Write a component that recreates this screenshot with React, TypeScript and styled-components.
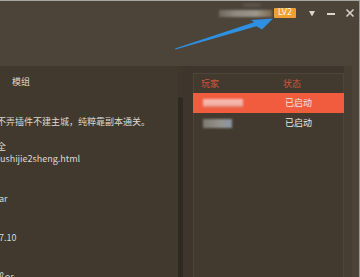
import React from "react";
import styled, { createGlobalStyle } from "styled-components";

const Global = createGlobalStyle`
  html, body { margin: 0; padding: 0; background: #4c4439; }
  body { font-family: "Noto Sans CJK SC", "Noto Sans", sans-serif; }
`;

const Window = styled.div`
  position: relative;
  width: 360px;
  height: 277px;
  box-sizing: border-box;
  background: #4c4439;
  border-top: 1px solid #a8a6a2;
  border-right: 1px solid #9c9a96;
  display: flex;
  flex-direction: column;
  overflow: hidden;
`;

const TitleBar = styled.div`
  height: 65px;
  flex: none;
  box-sizing: border-box;
  display: flex;
  justify-content: flex-end;
  align-items: flex-start;
  padding: 6px 4px 0 0;
`;

const UserBlur = styled.div`
  position: relative;
  width: 53px;
  height: 7px;
  margin-top: 3px;
  margin-right: 2px;
  background: linear-gradient(90deg, #6d675d, #8f8980 30%, #9c968c 70%, #7c6a4f);
  filter: blur(1.1px);
  &::before {
    content: "";
    position: absolute;
    left: 23px;
    top: -7px;
    width: 20px;
    height: 4px;
    border-radius: 50%;
    background: #5c544a;
  }
`;

const Badge = styled.div`
  width: 22px;
  height: 10px;
  margin-top: 1px;
  background: #efa033;
  border-radius: 1px;
  color: #fff6e6;
  font-family: "DejaVu Sans", "Liberation Sans", sans-serif;
  font-size: 8px;
  line-height: 10px;
  text-align: center;
`;

const IconBox = styled.div<{ $gap: number }>`
  width: 10px;
  height: 10px;
  margin-left: ${(p) => p.$gap}px;
  margin-top: 1px;
  display: flex;
  & svg { display: block; }
`;

const Body = styled.div`
  flex: 1;
  display: flex;
  margin-right: 7px;
  background: #3f372d;
  min-height: 0;
`;

const LeftPanel = styled.div`
  width: 178px;
  flex: none;
  background: #41392e;
  display: flex;
  flex-direction: column;
  overflow: hidden;
`;

const LeftHeader = styled.div`
  height: 31px;
  flex: none;
  box-sizing: border-box;
  padding-left: 12px;
  color: #dcd8d0;
  font-size: 9px;
  line-height: 31px;
`;

const List = styled.div`
  display: flex;
  flex-direction: column;
`;

const Item = styled.div<{ $top: number; $shift: number }>`
  margin-top: ${(p) => p.$top}px;
  margin-left: ${(p) => p.$shift}px;
  color: #dcd8d0;
  font-size: 9px;
  line-height: 12px;
  white-space: nowrap;
`;

const ScrollTrack = styled.div`
  width: 5px;
  flex: none;
  margin-top: 31px;
  background: #2e2922;
  border-radius: 3px 3px 0 0;
`;

const Gutter = styled.div<{ $w: number; $bg: string }>`
  width: ${(p) => p.$w}px;
  flex: none;
  background: ${(p) => p.$bg};
`;

const RightPanel = styled.div`
  width: 151px;
  flex: none;
  margin-top: 7px;
  background: #433a2f;
  box-shadow: inset 1px 0 #4d4539, inset -1px 0 #4d4539, inset 0 1px #4d4539;
  display: flex;
  flex-direction: column;
  padding-top: 1px;
`;

const Row = styled.div<{ $active?: boolean; $head?: boolean }>`
  height: ${(p) => (p.$head ? 19 : 20)}px;
  display: grid;
  grid-template-columns: 82px 1fr;
  align-items: center;
  padding-left: 8px;
  background: ${(p) => (p.$active ? "#f15c3e" : "transparent")};
  color: ${(p) => (p.$head ? "#cf553c" : "#ece8e0")};
  font-size: 9px;
  line-height: 12px;
`;

const Cell = styled.div<{ $pad?: number }>`
  padding-left: ${(p) => p.$pad ?? 0}px;
  white-space: nowrap;
`;

const NameBlur = styled.div<{ $w: number; $c: string }>`
  width: ${(p) => p.$w}px;
  height: 9px;
  margin-left: 2px;
  background: ${(p) => p.$c};
  filter: blur(1.3px);
`;

const ArrowLayer = styled.svg`
  position: absolute;
  left: 0;
  top: -1px;
  pointer-events: none;
`;

export default function App() {
  return (
    <>
      <Global />
      <Window>
        <TitleBar>
          <UserBlur />
          <Badge>LV2</Badge>
          <IconBox $gap={11}>
            <svg width="10" height="10" viewBox="0 0 10 10">
              <polygon points="2,3 8,3 5,8.5" fill="#dad6ce" />
            </svg>
          </IconBox>
          <IconBox $gap={9}>
            <svg width="10" height="10" viewBox="0 0 10 10">
              <rect x="1" y="5" width="8" height="2" fill="#dad6ce" />
            </svg>
          </IconBox>
          <IconBox $gap={9}>
            <svg width="10" height="10" viewBox="0 0 10 10">
              <path d="M1.5 1.5 L8.5 8.5 M8.5 1.5 L1.5 8.5" stroke="#dad6ce" strokeWidth="1.5" />
            </svg>
          </IconBox>
        </TitleBar>
        <Body>
          <LeftPanel>
            <LeftHeader>模组</LeftHeader>
            <List>
              <Item $top={19} $shift={-3}>不弄插件不建主城，纯粹靠副本通关。</Item>
              <Item $top={13} $shift={-3}>全</Item>
              <Item $top={0} $shift={0}>ushijie2sheng.html</Item>
              <Item $top={28} $shift={-1}>ar</Item>
              <Item $top={27} $shift={-1}>7.10</Item>
              <Item $top={27} $shift={-1}>ßor</Item>
            </List>
          </LeftPanel>
          <ScrollTrack />
          <Gutter $w={10} $bg="#3e362c" />
          <RightPanel>
            <Row $head>
              <Cell>玩家</Cell>
              <Cell>状态</Cell>
            </Row>
            <Row $active>
              <Cell>
                <NameBlur $w={40} $c="linear-gradient(180deg, #f7c0b6 0%, #f4aca0 70%, #d8563e 100%)" />
              </Cell>
              <Cell $pad={2}>已启动</Cell>
            </Row>
            <Row>
              <Cell>
                <NameBlur $w={29} $c="linear-gradient(90deg, #7d7a74, #96938d 60%, #8a96a6)" />
              </Cell>
              <Cell $pad={2}>已启动</Cell>
            </Row>
          </RightPanel>
          <Gutter $w={8} $bg="#463e33" />
        </Body>
        <ArrowLayer width="360" height="277" viewBox="0 0 360 277">
          <polygon
            points="175,48.6 254,22.2 251,20 273,18.6 262,29.6 256.5,26.2 175.4,49.6"
            fill="#2f8fe0"
          />
        </ArrowLayer>
      </Window>
    </>
  );
}
